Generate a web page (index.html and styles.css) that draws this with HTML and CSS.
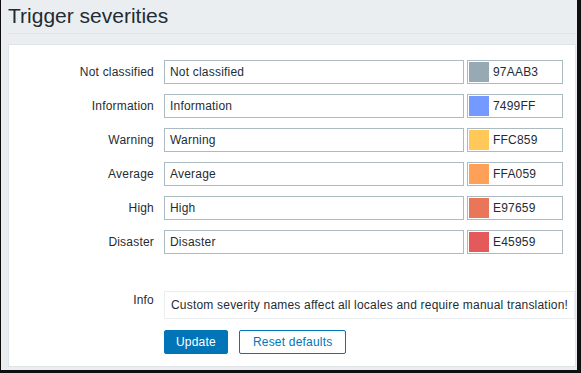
FILE: index.html
```html
<!DOCTYPE html>
<html lang="en">
<head>
  <meta charset="UTF-8">
  <meta name="viewport" content="width=device-width, initial-scale=1.0">
  <title>Trigger severities</title>
  <link rel="stylesheet" href="styles.css">
</head>
<body>
  <div class="frame">
    <header class="page-header">
      <h1>Trigger severities</h1>
    </header>
    <main class="form-box">
      <form class="form-list" onsubmit="return false">
        <div class="form-row">
          <label class="row-label">Not classified</label>
          <input class="text-input" type="text" value="Not classified">
          <div class="color-field"><span class="swatch sev-0"></span><span class="color-code">97AAB3</span></div>
        </div>
        <div class="form-row">
          <label class="row-label">Information</label>
          <input class="text-input" type="text" value="Information">
          <div class="color-field"><span class="swatch sev-1"></span><span class="color-code">7499FF</span></div>
        </div>
        <div class="form-row">
          <label class="row-label">Warning</label>
          <input class="text-input" type="text" value="Warning">
          <div class="color-field"><span class="swatch sev-2"></span><span class="color-code">FFC859</span></div>
        </div>
        <div class="form-row">
          <label class="row-label">Average</label>
          <input class="text-input" type="text" value="Average">
          <div class="color-field"><span class="swatch sev-3"></span><span class="color-code">FFA059</span></div>
        </div>
        <div class="form-row">
          <label class="row-label">High</label>
          <input class="text-input" type="text" value="High">
          <div class="color-field"><span class="swatch sev-4"></span><span class="color-code">E97659</span></div>
        </div>
        <div class="form-row">
          <label class="row-label">Disaster</label>
          <input class="text-input" type="text" value="Disaster">
          <div class="color-field"><span class="swatch sev-5"></span><span class="color-code">E45959</span></div>
        </div>
        <!-- Info -->
        <div class="form-row info-row">
          <div class="row-label info-label">Info</div>
          <div class="info-box">Custom severity names affect all locales and require manual translation!</div>
        </div>
        <div class="form-row buttons-row">
          <div class="row-label"></div>
          <button class="btn btn-primary" type="submit">Update</button>
          <button class="btn btn-alt" type="button">Reset defaults</button>
        </div>
      </form>
    </main>
  </div>
</body>
</html>
```

FILE: styles.css
```css
:root {
  --text: #1f2c33;
  --page-bg: #ebeef0;
  --line: #dfe4e7;
  --input-border: #acbbc2;
  --blue: #0275b8;
}
* { box-sizing: border-box; }
html, body { margin:0; padding:0; }
body {
  background:#0f0f0f;
  font-family:"Liberation Sans", Arial, sans-serif;
  font-size:12px;
  letter-spacing:0.2px;
  color:var(--text);
  width:581px; height:373px; overflow:hidden;
}
.frame {
  margin-left:1px; width:576px; height:370px;
  background:var(--page-bg);
  padding:0 0 0 7px;
}
/* Header */
.page-header { padding:4px 0 5px; border-bottom:1px solid var(--line); }
.page-header h1 { margin:0; font-size:21px; line-height:24px; font-weight:normal; letter-spacing:0; color:var(--text); }
/* Form */
.form-box {
  margin:10px 1px 0 0; background:#fff; border:1px solid var(--line);
  padding:15px 0 12px;
}
.form-row { display:flex; align-items:center; margin-bottom:10px; }
.row-label { width:145px; margin-right:10px; text-align:right; line-height:14px; flex:none; }
.text-input {
  width:300px; height:24px; padding:0 5px; margin:0;
  border:1px solid var(--input-border); border-radius:0;
  font:inherit; letter-spacing:inherit; color:var(--text); background:#fff; outline:none;
}
.color-field {
  margin-left:3px; width:96px; height:24px; padding:1px;
  border:1px solid var(--input-border); display:flex; align-items:center;
}
.swatch { width:20px; height:20px; flex:none; }
.color-code { margin-left:4px; }
.sev-0 { background:#97aab3; }
.sev-1 { background:#7499ff; }
.sev-2 { background:#ffc859; }
.sev-3 { background:#ffa059; }
.sev-4 { background:#e97659; }
.sev-5 { background:#e45959; }
/* Info */
.info-row { margin-top:37px; align-items:flex-start; margin-bottom:11px; }
.info-label { padding-top:2px; }
.info-box { border:1px solid var(--page-bg); padding:6px; line-height:14px; white-space:nowrap; }
/* Buttons */
.buttons-row { margin-bottom:0; }
.btn {
  height:24px; padding:0 11px; margin:0; border:1px solid var(--blue); border-radius:2px;
  font:inherit; letter-spacing:inherit; cursor:pointer;
}
.btn-primary { background:var(--blue); color:#fff; }
.btn-alt { background:#fff; color:var(--blue); margin-left:11px; padding:0 13px; }
```
